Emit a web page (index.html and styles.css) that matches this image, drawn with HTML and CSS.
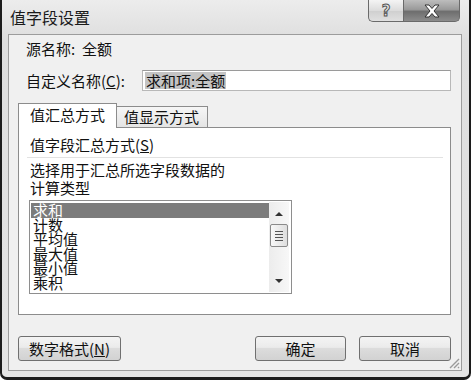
FILE: index.html
```html
<html>
<head>
<meta http-equiv="Content-Type" content="text/html; charset=utf-8">
<title>值字段设置</title>
<link rel="stylesheet" href="styles.css">
</head>
<body>
<div class="window">
	<div class="titlebar">
		<span class="title">值字段设置</span>
		<div class="caption">
			<span class="cbtn help">?</span>
			<span class="cbtn close">
				<svg width="20" height="14" viewBox="0 0 20 14">
					<path d="M3 1h4l3 3.5 3-3.5h4l-5 6 5 6h-4l-3-3.5-3 3.5h-4l5-6z" fill="#fff" stroke="#333" stroke-width="1"/>
				</svg>
			</span>
		</div>
	</div>
	<div class="client">
		<div class="row src">源名称:&nbsp;&nbsp;全额</div>
		<div class="row custom">
			<label class="lbl">自定义名称(<u>C</u>):</label>
			<div class="input"><span class="sel">求和项:全额</span></div>
		</div>
		<div class="tabs">
			<div class="tab active">值汇总方式</div>
			<div class="tab">值显示方式</div>
		</div>
		<div class="panel">
			<div class="ptitle">值字段汇总方式(<u>S</u>)</div>
			<div class="sep"></div>
			<div class="desc">选择用于汇总所选字段数据的<br>计算类型</div>
			<div class="listbox">
				<ul class="items">
					<li class="selected">求和</li>
					<li>计数</li>
					<li>平均值</li>
					<li>最大值</li>
					<li>最小值</li>
					<li>乘积</li>
				</ul>
				<div class="scrollbar">
					<span class="arrow up"></span>
					<span class="thumb"><i></i><i></i><i></i><i></i></span>
					<span class="arrow down"></span>
				</div>
			</div>
		</div>
		<div class="buttons">
			<button class="btn fmt">数字格式(<u>N</u>)</button>
			<span class="spacer"></span>
			<button class="btn ok">确定</button>
			<button class="btn cancel">取消</button>
		</div>
		<svg class="grip" width="12" height="12" viewBox="0 0 12 12">
			<path d="M11 2L2 11M11 6L6 11M11 10L10 11" stroke="#9a9a9a" stroke-width="1.4"/>
		</svg>
	</div>
</div>
</body>
</html>
```

FILE: styles.css
```css
body{
	margin:0;
	background:#fff;
	font-family:"Noto Sans CJK SC","Liberation Sans",sans-serif;
	font-size:15px;
	color:#111;
}
u{
	text-decoration:underline;
}
.window{
	width:471px;
	height:380px;
	box-sizing:border-box;
	border:2px solid #1c1c1c;
	border-top:0;
	border-bottom-width:3px;
	border-radius:0 0 7px 7px;
	padding:0 7px 6px 6px;
	background:linear-gradient(to bottom,#ececec 0,#dedede 40px,#e4e4e4 100%);
	display:flex;
	flex-direction:column;
}
.titlebar{
	height:34px;
	display:flex;
	justify-content:space-between;
	align-items:flex-start;
	flex:none;
}
.title{
	margin:7px 0 0 2px;
	font-size:16px;
	line-height:20px;
	color:#1a1a1a;
}
.caption{
	display:flex;
	margin-right:2px;
}
.cbtn{
	height:22px;
	box-sizing:border-box;
	border:1px solid #6a6a6a;
	border-top:0;
	display:flex;
	align-items:center;
	justify-content:center;
}
.help{
	width:35px;
	border-radius:0 0 0 5px;
	border-right:0;
	background:linear-gradient(to bottom,#f4f4f4,#dcdcdc 50%,#cfcfcf 51%,#e0e0e0);
	font-family:"DejaVu Sans",sans-serif;
	font-weight:bold;
	font-size:15px;
	color:#e8e8e8;
	-webkit-text-stroke:1px #555;
}
.close{
	width:57px;
	border-radius:0 0 5px 0;
	background:linear-gradient(to bottom,#bdbdbd,#9a9a9a 45%,#6e6e6e 55%,#8c8c8c);
}
.client{
	flex:1;
	position:relative;
	border:1px solid #9c9c9c;
	background:#f0f0f0;
	display:flex;
	flex-direction:column;
	padding:0 10px 8px 9px;
}
.row{
	display:flex;
	align-items:center;
	padding-left:8px;
}
.src{
	margin-top:4px;
	height:19px;
}
.custom{
	margin-top:11px;
	height:22px;
}
.lbl{
	width:116px;
	flex:none;
}
.input{
	width:320px;
	height:21px;
	box-sizing:border-box;
	border:1px solid #b8b8b8;
	border-top-color:#9a9a9a;
	background:#fff;
	padding:1px 2px;
	display:flex;
	align-items:center;
}
.sel{
	background:#c4c4c4;
	line-height:17px;
	padding:0 1px;
}
.tabs{
	margin-top:12px;
	display:flex;
	align-items:flex-end;
	height:24px;
	position:relative;
	z-index:1;
}
.tab{
	box-sizing:border-box;
	border:1px solid #8c8c8c;
	border-bottom:0;
	background:linear-gradient(to bottom,#f6f6f6,#e4e4e4);
	width:92px;
	height:21px;
	padding-left:7px;
	line-height:20px;
	margin-left:-1px;
}
.tab.active{
	width:99px;
	height:25px;
	background:#fff;
	padding-left:11px;
	line-height:22px;
	margin-left:0;
	margin-bottom:-1px;
}
.tab.active + .tab{
	margin-left:-1px;
}
.panel{
	width:433px;
	height:188px;
	box-sizing:border-box;
	border:1px solid #8c8c8c;
	background:#fff;
	padding:7px 0 0 10px;
	flex:none;
}
.ptitle{
	line-height:20px;
	padding-left:1px;
}
.sep{
	height:1px;
	background:#e2e2e2;
	margin:2px 7px 3px -2px;
}
.desc{
	line-height:18px;
	padding-left:1px;
}
.listbox{
	margin-top:3px;
	width:263px;
	height:94px;
	box-sizing:border-box;
	border:1px solid #8e8e8e;
	display:flex;
	padding:1px 2px 1px 1px;
}
.items{
	flex:1;
	margin:0;
	padding:1px 0 0 0;
	list-style:none;
	overflow:hidden;
}
.items li{
	line-height:14.6px;
	height:14.6px;
	padding-left:2px;
	font-size:15px;
	overflow:visible;
}
.items li.selected{
	background:#7c7c7c;
	color:#fff;
}
.scrollbar{
	width:20px;
	background:linear-gradient(to right,#ececec,#f7f7f7);
	position:relative;
	display:flex;
	flex-direction:column;
	align-items:center;
}
.arrow{
	width:0;
	height:0;
	border-left:4px solid transparent;
	border-right:4px solid transparent;
}
.arrow.up{
	border-bottom:4px solid #333;
	margin-top:10px;
}
.arrow.down{
	border-top:4px solid #333;
	margin-top:32px;
}
.thumb{
	width:18px;
	height:23px;
	box-sizing:border-box;
	margin-top:8px;
	border:1px solid #8a8a8a;
	border-radius:2px;
	background:linear-gradient(to right,#f8f8f8,#dedede);
	display:flex;
	flex-direction:column;
	align-items:center;
	justify-content:center;
	gap:2px;
}
.thumb i{
	display:block;
	width:8px;
	height:1px;
	background:#555;
}
.buttons{
	margin-top:21px;
	display:flex;
	align-items:center;
}
.spacer{
	flex:1;
}
.btn{
	height:25px;
	box-sizing:border-box;
	border:1px solid #707070;
	border-radius:3px;
	background:linear-gradient(to bottom,#f4f4f4 0,#ebebeb 45%,#dcdcdc 50%,#d2d2d2 100%);
	font-family:"Noto Sans CJK SC","Liberation Sans",sans-serif;
	font-size:15px;
	color:#111;
	padding:0;
	line-height:21px;
}
.fmt{
	width:103px;
}
.ok{
	width:91px;
	margin-right:13px;
}
.cancel{
	width:92px;
}
.grip{
	position:absolute;
	right:1px;
	bottom:1px;
}
```
